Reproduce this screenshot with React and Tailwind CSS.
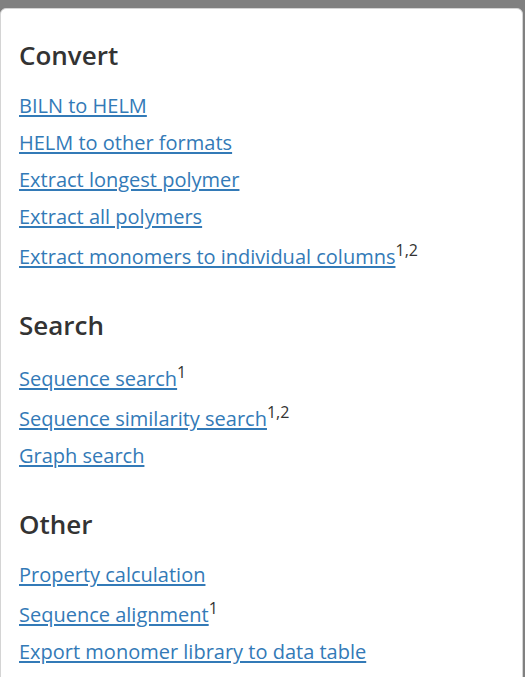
import React from "react";

const sections = [
  {
    title: "Convert",
    links: [
      { text: "BILN to HELM" },
      { text: "HELM to other formats" },
      { text: "Extract longest polymer" },
      { text: "Extract all polymers" },
      { text: "Extract monomers to individual columns", sup: "1,2" },
    ],
  },
  {
    title: "Search",
    links: [
      { text: "Sequence search", sup: "1" },
      { text: "Sequence similarity search", sup: "1,2" },
      { text: "Graph search" },
    ],
  },
  {
    title: "Other",
    links: [
      { text: "Property calculation" },
      { text: "Sequence alignment", sup: "1" },
      { text: "Export monomer library to data table" },
    ],
  },
];

export default function App() {
  return (
    <div
      className="min-h-screen bg-[#808080] pt-2"
      style={{ fontFamily: '"Open Sans", "Noto Sans", sans-serif' }}
    >
      <div className="mr-[2px] min-h-[669px] rounded-t-md border border-[#d4d4d4] bg-white px-[18px] pt-[26px]">
        {sections.map((s) => (
          <section key={s.title} className="mb-[34px]">
            <h2 className="mb-[17px] text-[26px] font-semibold leading-[40px] text-[#333333]">
              {s.title}
            </h2>
            <ul className="flex flex-col gap-[9px]">
              {s.links.map((l) => (
                <li
                  key={l.text}
                  className={l.sup ? "pt-[3px] text-[20px] leading-[28px]" : "text-[20px] leading-[28px]"}
                >
                  <a href="#" className="text-[#337ab7] underline underline-offset-2">
                    {l.text}
                  </a>
                  {l.sup && (
                    <sup className="text-[16px] text-[#333333]">{l.sup}</sup>
                  )}
                </li>
              ))}
            </ul>
          </section>
        ))}
      </div>
    </div>
  );
}
